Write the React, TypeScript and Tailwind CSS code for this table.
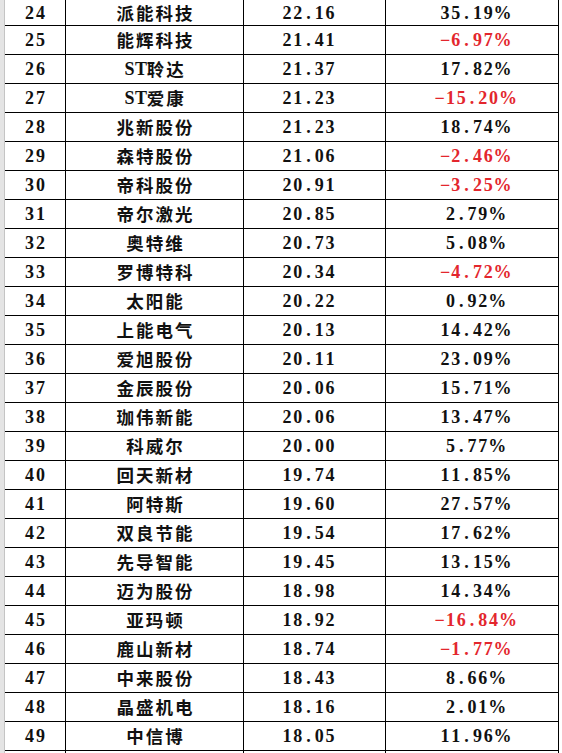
import React from "react"

type Row = [number, string, string, string]

const rows: Row[] = [
  [24, "派能科技", "22.16", "35.19%"],
  [25, "能辉科技", "21.41", "-6.97%"],
  [26, "ST聆达", "21.37", "17.82%"],
  [27, "ST爱康", "21.23", "-15.20%"],
  [28, "兆新股份", "21.23", "18.74%"],
  [29, "森特股份", "21.06", "-2.46%"],
  [30, "帝科股份", "20.91", "-3.25%"],
  [31, "帝尔激光", "20.85", "2.79%"],
  [32, "奥特维", "20.73", "5.08%"],
  [33, "罗博特科", "20.34", "-4.72%"],
  [34, "太阳能", "20.22", "0.92%"],
  [35, "上能电气", "20.13", "14.42%"],
  [36, "爱旭股份", "20.11", "23.09%"],
  [37, "金辰股份", "20.06", "15.71%"],
  [38, "珈伟新能", "20.06", "13.47%"],
  [39, "科威尔", "20.00", "5.77%"],
  [40, "回天新材", "19.74", "11.85%"],
  [41, "阿特斯", "19.60", "27.57%"],
  [42, "双良节能", "19.54", "17.62%"],
  [43, "先导智能", "19.45", "13.15%"],
  [44, "迈为股份", "18.98", "14.34%"],
  [45, "亚玛顿", "18.92", "-16.84%"],
  [46, "鹿山新材", "18.74", "-1.77%"],
  [47, "中来股份", "18.43", "8.66%"],
  [48, "晶盛机电", "18.16", "2.01%"],
  [49, "中信博", "18.05", "11.96%"],
]

// SimSun-like cells: half-width latin, full-width hanzi
const CellText = ({ text }: { text: string }) => (
  <span className="flex">
    {Array.from(text).map((ch, i) =>
      /[\x00-\x7f]/.test(ch) ? (
        <span
          key={i}
          className="inline-block w-[10.8px] text-center font-['Liberation_Serif',serif] text-[18px] font-bold"
        >
          {ch === "-" ? "−" : ch}
        </span>
      ) : (
        <span
          key={i}
          className="inline-block w-[19.5px] text-center font-['Noto_Sans_CJK_SC',sans-serif] text-[17.5px] font-bold"
        >
          {ch}
        </span>
      ),
    )}
  </span>
)

export default function App() {
  return (
    <div className="flex h-[753px] w-[562px] overflow-hidden bg-white text-[#111]">
      <div className="w-[4px] shrink-0 bg-[#e4e4e4]" />
      <div className="w-px shrink-0 bg-[#c4c4c4]" />
      <div className="flex flex-col">
        {rows.map(([no, name, price, pct], idx) => (
          <div
            key={no}
            className={
              idx === 0
                ? "flex h-[26px] shrink-0 border-b border-black leading-none"
                : "flex h-[29px] shrink-0 border-b border-black leading-none"
            }
          >
            <div className="flex w-[61px] items-center justify-center border-r border-black">
              <CellText text={String(no)} />
            </div>
            <div className="flex w-[178px] items-center justify-center border-r border-black">
              <CellText text={name} />
            </div>
            <div className="flex w-[142px] items-center justify-center border-r border-black pr-3">
              <CellText text={price} />
            </div>
            <div
              className={
                pct.startsWith("-")
                  ? "flex w-[173px] items-center justify-center border-r border-black text-[#e3262d]"
                  : "flex w-[173px] items-center justify-center border-r border-black"
              }
            >
              <CellText text={pct} />
            </div>
          </div>
        ))}
        <div className="flex h-[29px] shrink-0">
          <div className="w-[61px] border-r border-black" />
          <div className="w-[178px] border-r border-black" />
          <div className="w-[142px] border-r border-black" />
          <div className="w-[173px] border-r border-black" />
        </div>
      </div>
    </div>
  )
}
